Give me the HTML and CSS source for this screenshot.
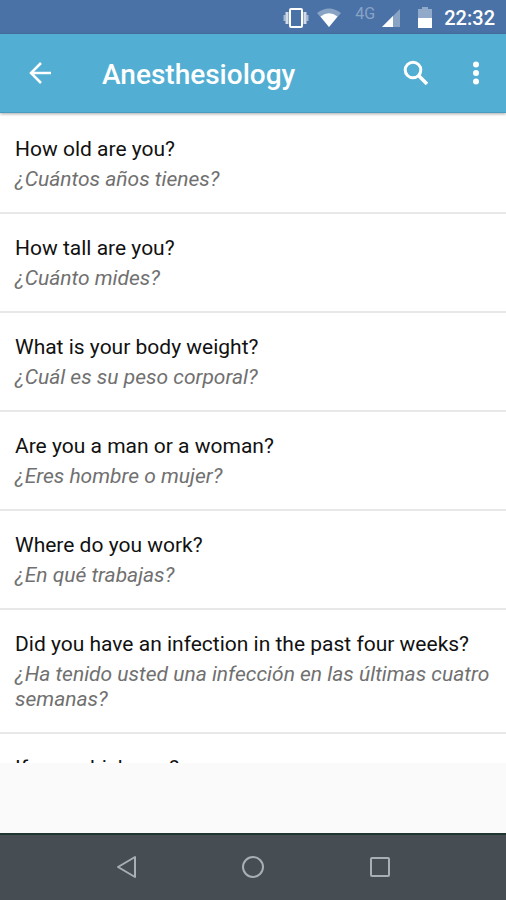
FILE: index.html
```html
<!DOCTYPE html>
<html lang="en">
<head>
<meta charset="utf-8">
<meta name="viewport" content="width=device-width, initial-scale=1">
<title>Anesthesiology</title>
<link rel="stylesheet" href="styles.css">
</head>
<body>
<div class="status-bar">
  <svg class="vibrate" width="26" height="22" viewBox="0 0 26 22" fill="none" stroke="#fff"><rect x="7" y="2" width="12" height="18" rx="1" stroke-width="2"/><path d="M4 5v12M22 5v12" stroke-width="3" opacity=".75"/><path d="M1.500 8v6M24.500 8v6" stroke-width="2" opacity=".5"/></svg>
  <svg class="wifi" width="24" height="20" viewBox="0 0 24 20"><path d="M0 5Q12-4 24 5L12 19z" fill="#fff" opacity=".35"/><path d="M3.500 8.500Q12 2 20.500 8.500L12 19z" fill="#fff"/></svg>
  <span class="network">4G</span>
  <svg class="signal" width="18" height="18" viewBox="0 0 18 18"><path d="M18 0v18H0z" fill="#fff" opacity=".35"/><path d="M11 7v11H0z" fill="#fff"/></svg>
  <svg class="battery" width="14" height="22" viewBox="0 0 14 22"><path d="M4 0h6v2h4v9H0V2h4z" fill="#fff" opacity=".4"/><path d="M0 11h14v9.500q0 .5-.5.5H.5q-.5 0-.5-.5z" fill="#fff"/></svg>
  <time class="clock">22:32</time>
</div>
<header class="app-bar">
  <button class="icon-button" type="button" aria-label="Back"><svg width="24" height="24" viewBox="0 0 24 24" fill="none" stroke="#fff" stroke-width="2.500"><path d="M23 12H3M13 2L3 12l10 10"/></svg></button>
  <h1 class="title">Anesthesiology</h1>
  <button class="icon-button search" type="button" aria-label="Search"><svg width="26" height="26" viewBox="0 0 26 26" fill="none" stroke="#fff"><circle cx="10" cy="10" r="7.800" stroke-width="3"/><path d="M15.500 15.500l8.500 8.500" stroke-width="3.500"/></svg></button>
  <button class="icon-button more" type="button" aria-label="More options"><svg width="8" height="24" viewBox="0 0 8 24" fill="#fff"><circle cx="4" cy="3.500" r="3"/><circle cx="4" cy="12" r="3"/><circle cx="4" cy="20.500" r="3"/></svg></button>
</header>
<main class="content">
  <ul class="phrases">
    <li class="phrase"><p class="source">How old are you?</p><p class="translation" lang="es">¿Cuántos años tienes?</p></li>
    <li class="phrase"><p class="source">How tall are you?</p><p class="translation" lang="es">¿Cuánto mides?</p></li>
    <li class="phrase"><p class="source">What is your body weight?</p><p class="translation" lang="es">¿Cuál es su peso corporal?</p></li>
    <li class="phrase"><p class="source">Are you a man or a woman?</p><p class="translation" lang="es">¿Eres hombre o mujer?</p></li>
    <li class="phrase"><p class="source">Where do you work?</p><p class="translation" lang="es">¿En qué trabajas?</p></li>
    <li class="phrase"><p class="source">Did you have an infection in the past four weeks?</p><p class="translation" lang="es">¿Ha tenido usted una infección en las últimas cuatro semanas?</p></li>
    <li class="phrase"><p class="source">If yes, which one?</p></li>
  </ul>
</main>
<nav class="nav-bar" aria-label="System">
  <button class="nav-button" type="button" aria-label="Back"><svg width="24" height="24" viewBox="0 0 24 24"><path d="M21 2v20L4 12z"/></svg></button>
  <button class="nav-button" type="button" aria-label="Home"><svg width="24" height="24" viewBox="0 0 24 24"><circle cx="12" cy="12" r="10"/></svg></button>
  <button class="nav-button" type="button" aria-label="Recent apps"><svg width="24" height="24" viewBox="0 0 24 24"><rect x="3" y="3" width="18" height="18" rx="1"/></svg></button>
</nav>
</body>
</html>
```

FILE: styles.css
```css
* {
  box-sizing: border-box;
}

body {
  margin: 0;
  height: 100vh;
  display: flex;
  flex-direction: column;
  background: #fafafa;
  font-family: Roboto, "Liberation Sans", sans-serif;
}

button {
  display: flex;
  align-items: center;
  justify-content: center;
  padding: 0;
  border: 0;
  background: none;
}

.status-bar {
  display: flex;
  align-items: center;
  justify-content: flex-end;
  flex: none;
  height: 34px;
  padding: 2px 11px 0 0;
  background: #4a72a6;
  color: #fff;
}

.wifi {
  margin-left: 8px;
}

.network {
  align-self: flex-start;
  margin: 2px 7px 0 14px;
  font-size: 16px;
  line-height: 20px;
  color: #88a3c6;
}

.battery {
  margin: 0 12px 0 18px;
}

.clock {
  font-size: 20px;
  font-weight: 500;
}

.app-bar {
  display: flex;
  align-items: center;
  flex: none;
  height: 79px;
  padding: 0 6px 0 16px;
  background: #52aed2;
  border-bottom: 1px solid #459dc1;
  box-shadow: 0 1px 3px rgba(0, 0, 0, 0.35);
  z-index: 1;
}

.icon-button {
  width: 48px;
  height: 48px;
}

.title {
  flex: 1;
  margin: 0 0 0 38px;
  padding-top: 4px;
  font-size: 28px;
  font-weight: 500;
  line-height: 36px;
  color: #fff;
}

.more {
  margin-left: 12px;
}

.content {
  flex: 1;
  min-height: 0;
  padding-bottom: 70px;
}

.phrases {
  height: 100%;
  margin: 0;
  padding: 2px 0 0;
  overflow: hidden;
  list-style: none;
  background: #fff;
}

.phrase {
  padding: 22px 12px 20px 15px;
  border-bottom: 2px solid #e8e8e8;
}

.phrase p {
  margin: 0;
  font-size: 21px;
  line-height: 25px;
}

.source {
  color: #111;
}

.phrase .translation {
  margin-top: 5px;
  font-style: italic;
  color: #707070;
}

.nav-bar {
  display: flex;
  justify-content: center;
  gap: 79px;
  flex: none;
  height: 67px;
  padding-bottom: 2px;
  border-top: 2px solid #20352f;
  background: #464e54;
}

.nav-button {
  width: 48px;
}

.nav-button svg {
  fill: none;
  stroke: #a9afb2;
  stroke-width: 2;
  stroke-linejoin: round;
}
```
